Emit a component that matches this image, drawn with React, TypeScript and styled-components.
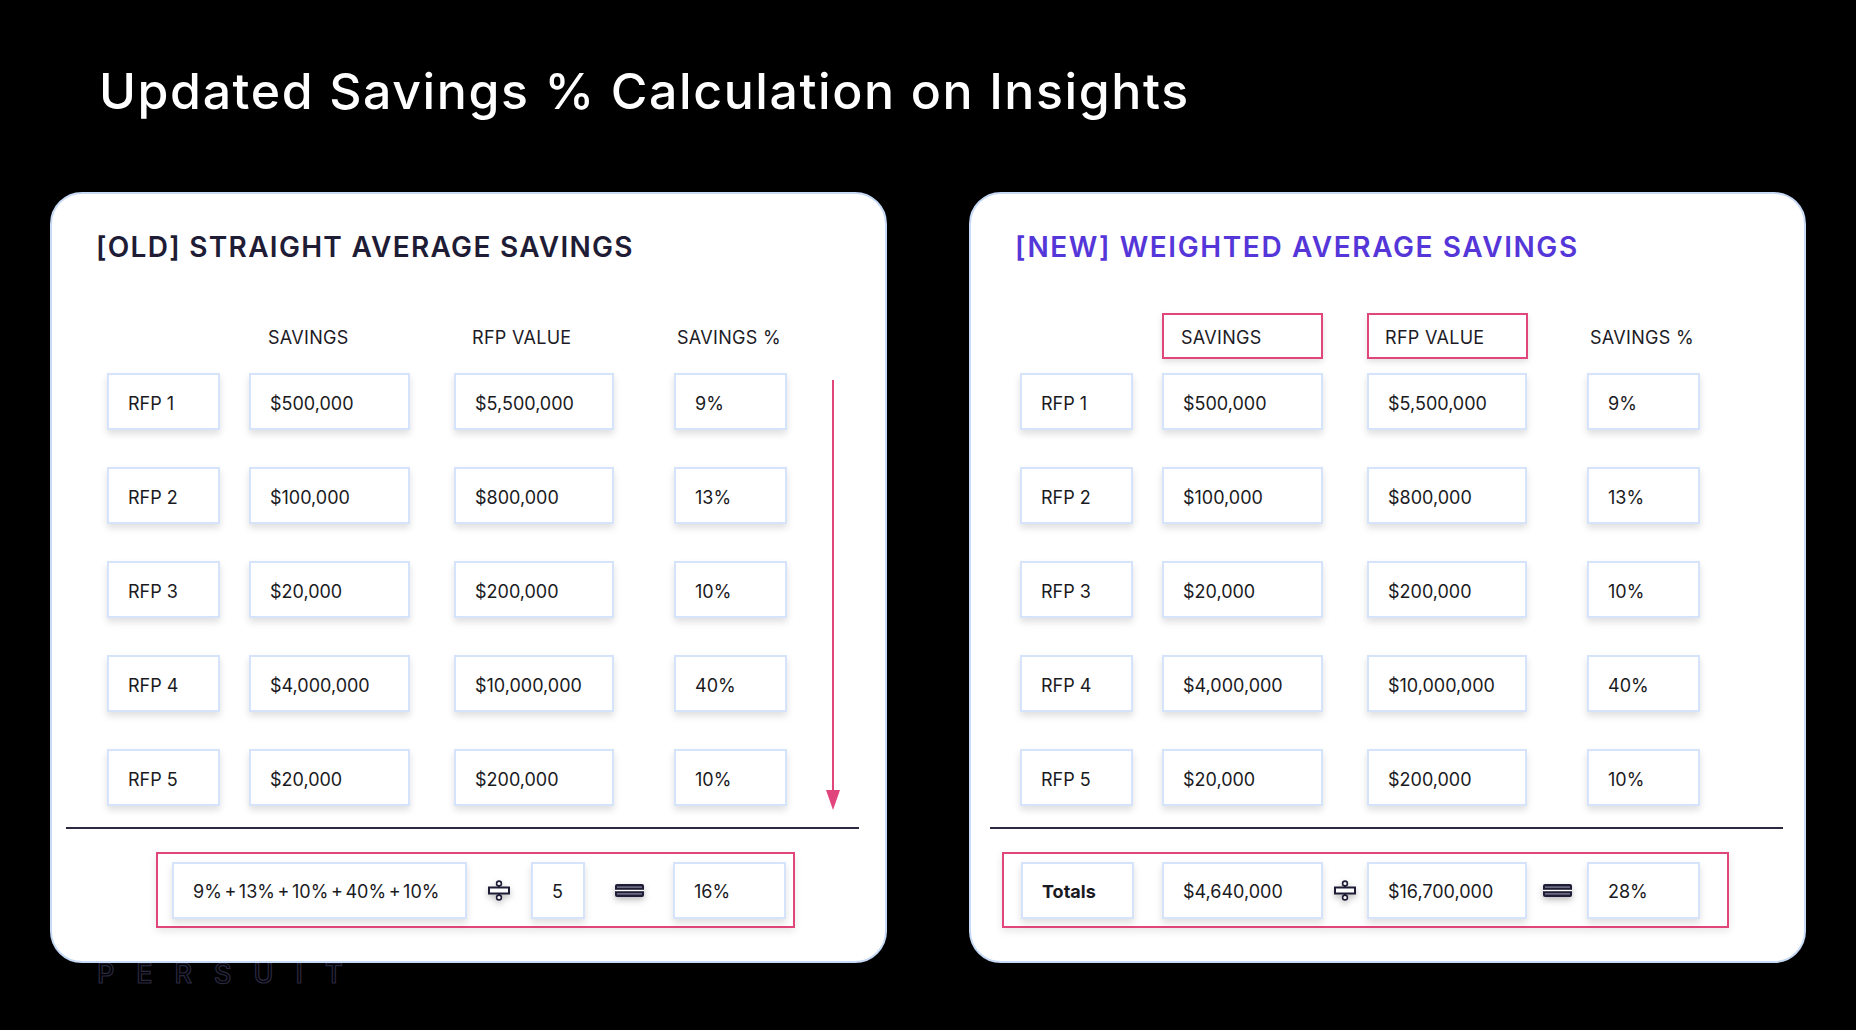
import React from "react";
import styled, { createGlobalStyle } from "styled-components";

const GlobalStyle = createGlobalStyle`
  html, body {
    margin: 0;
    padding: 0;
    background: #000;
  }
  body {
    font-family: Inter, "Noto Sans", sans-serif;
  }
`;

const PINK = "#e0457b";
const NAVY = "#1f1c36";

type Row = [string, string, string, string];

const rows: Row[] = [
  ["RFP 1", "$500,000", "$5,500,000", "9%"],
  ["RFP 2", "$100,000", "$800,000", "13%"],
  ["RFP 3", "$20,000", "$200,000", "10%"],
  ["RFP 4", "$4,000,000", "$10,000,000", "40%"],
  ["RFP 5", "$20,000", "$200,000", "10%"],
];

const DivideIcon = () => (
  <svg width="22" height="21" viewBox="0 0 22 21">
    <line x1="11" y1="5" x2="11" y2="16" stroke={NAVY} strokeWidth="2" />
    <circle cx="11" cy="3.5" r="2.4" fill="#fff" stroke={NAVY} strokeWidth="1.6" />
    <circle cx="11" cy="17.5" r="2.4" fill="#fff" stroke={NAVY} strokeWidth="1.6" />
    <rect x="1" y="7.5" width="20" height="6" fill="#fff" stroke={NAVY} strokeWidth="2" />
  </svg>
);

const EqualsIcon = () => (
  <svg width="29" height="13" viewBox="0 0 29 13">
    <rect x="0" y="0" width="29" height="13" rx="2" fill={NAVY} />
    <rect x="2" y="2.5" width="25" height="1.2" fill="#8d8aa3" />
    <rect x="0" y="5.8" width="29" height="1.4" fill="#fff" />
    <rect x="2" y="9.3" width="25" height="1.2" fill="#8d8aa3" />
  </svg>
);

const DownArrow = () => (
  <svg width="16" height="430" viewBox="0 0 16 430">
    <line x1="8" y1="0" x2="8" y2="414" stroke={PINK} strokeWidth="2" />
    <polygon points="1,410 15,410 8,430" fill={PINK} />
  </svg>
);

const Page = styled.div`
  position: relative;
  width: 1856px;
  height: 1030px;
  background: #000;
  overflow: hidden;
`;

const Heading = styled.h1`
  margin: 0;
  padding: 61px 0 0 99px;
  font-size: 50px;
  line-height: 60px;
  font-weight: 500;
  color: #fff;
  letter-spacing: 1.6px;
`;

const Cards = styled.div`
  position: relative;
  z-index: 1;
  display: flex;
  gap: 82px;
  padding: 71px 0 0 50px;
`;

const Card = styled.section`
  position: relative;
  box-sizing: border-box;
  width: 837px;
  height: 771px;
  padding-top: 36px;
  background: #fff;
  border: 2px solid #c8daf5;
  border-radius: 32px;
`;

const CardTitle = styled.h2<{ $accent?: boolean }>`
  margin: 0 0 0 44px;
  font-size: 28px;
  line-height: 34px;
  font-weight: 600;
  letter-spacing: ${(p) => (p.$accent ? 1.6 : 1.3)}px;
  color: ${(p) => (p.$accent ? "#5536d8" : NAVY)};
`;

const Table = styled.div<{ $inset: number }>`
  margin: 49px 0 0 ${(p) => p.$inset}px;
`;

const Columns = styled.div`
  display: grid;
  grid-template-columns: 142px 205px 220px 113px;
`;

const HeaderRow = styled(Columns)`
  height: 46px;
  margin-bottom: 14px;
`;

const DataRows = styled(Columns)`
  row-gap: 37px;
`;

const HeaderCell = styled.div<{ $w: number; $outlined?: boolean; $pad: number }>`
  box-sizing: border-box;
  width: ${(p) => p.$w}px;
  height: 46px;
  display: flex;
  align-items: center;
  padding: 2px 0 0 ${(p) => p.$pad}px;
  font-size: 18px;
  letter-spacing: 0.3px;
  color: #1c1b26;
  border: 2px solid ${(p) => (p.$outlined ? PINK : "transparent")};
  box-shadow: ${(p) => (p.$outlined ? "0 3px 6px rgba(0, 0, 0, 0.12)" : "none")};
`;

const Cell = styled.div<{ $w: number; $bold?: boolean; $tight?: boolean }>`
  box-sizing: border-box;
  width: ${(p) => p.$w}px;
  height: 57px;
  display: flex;
  align-items: center;
  padding: 3px 0 0 19px;
  background: #fff;
  border: 2px solid #d6e4fb;
  box-shadow: 0 4px 7px rgba(0, 0, 0, 0.13);
  font-size: 18px;
  font-weight: ${(p) => (p.$bold ? 700 : 400)};
  word-spacing: ${(p) => (p.$tight ? -2.5 : 0)}px;
  color: #1a1a22;
  white-space: nowrap;
`;

const Divider = styled.hr<{ $inset: number }>`
  width: 793px;
  height: 2px;
  margin: 21px 0 0 ${(p) => p.$inset}px;
  border: 0;
  background: #2b2840;
`;

const TotalsBox = styled.div<{ $inset: number; $w: number; $pad: number }>`
  box-sizing: border-box;
  display: flex;
  align-items: center;
  width: ${(p) => p.$w}px;
  height: 76px;
  margin: 23px 0 0 ${(p) => p.$inset}px;
  padding-left: ${(p) => p.$pad}px;
  border: 2px solid ${PINK};
  box-shadow: 0 3px 8px rgba(0, 0, 0, 0.1);
`;

const Slot = styled.div<{ $w: number }>`
  width: ${(p) => p.$w}px;
  flex: none;
  display: flex;
  align-items: center;
  justify-content: center;
  filter: drop-shadow(0 3px 3px rgba(0, 0, 0, 0.25));
`;

const ArrowWrap = styled.div`
  position: absolute;
  left: 773px;
  top: 186px;
  line-height: 0;
`;

const Watermark = styled.div`
  position: absolute;
  left: 97px;
  top: 957px;
  z-index: 0;
  font-size: 27px;
  font-weight: 500;
  letter-spacing: 22px;
  color: transparent;
  -webkit-text-stroke: 1.2px #2a2840;
`;

const widths = [113, 161, 160, 113];

const SavingsTable = ({ inset, outlined }: { inset: number; outlined?: boolean }) => (
  <Table $inset={inset}>
    <HeaderRow>
      <div />
      <HeaderCell $w={161} $pad={17} $outlined={outlined}>SAVINGS</HeaderCell>
      <HeaderCell $w={161} $pad={16} $outlined={outlined}>RFP VALUE</HeaderCell>
      <HeaderCell $w={113} $pad={1}>SAVINGS %</HeaderCell>
    </HeaderRow>
    <DataRows>
      {rows.map((r) =>
        r.map((v, i) => (
          <Cell key={r[0] + i} $w={widths[i]}>
            {v}
          </Cell>
        )),
      )}
    </DataRows>
  </Table>
);

export default function App() {
  return (
    <Page>
      <GlobalStyle />
      <Heading>Updated Savings % Calculation on Insights</Heading>
      <Cards>
        <Card>
          <CardTitle>[OLD] STRAIGHT AVERAGE SAVINGS</CardTitle>
          <SavingsTable inset={55} />
          <Divider $inset={14} />
          <TotalsBox $inset={104} $w={639} $pad={14}>
            <Cell $w={295} $tight>
              9% + 13% + 10% + 40% + 10%
            </Cell>
            <Slot $w={64}>
              <DivideIcon />
            </Slot>
            <Cell $w={54}>5</Cell>
            <Slot $w={88}>
              <EqualsIcon />
            </Slot>
            <Cell $w={113}>16%</Cell>
          </TotalsBox>
          <ArrowWrap>
            <DownArrow />
          </ArrowWrap>
        </Card>
        <Card>
          <CardTitle $accent>[NEW] WEIGHTED AVERAGE SAVINGS</CardTitle>
          <SavingsTable inset={49} outlined />
          <Divider $inset={19} />
          <TotalsBox $inset={31} $w={727} $pad={17}>
            <Cell $w={113} $bold>
              Totals
            </Cell>
            <Slot $w={28} />
            <Cell $w={161}>$4,640,000</Cell>
            <Slot $w={44}>
              <DivideIcon />
            </Slot>
            <Cell $w={160}>$16,700,000</Cell>
            <Slot $w={60}>
              <EqualsIcon />
            </Slot>
            <Cell $w={113}>28%</Cell>
          </TotalsBox>
        </Card>
      </Cards>
      <Watermark>PERSUIT</Watermark>
    </Page>
  );
}
